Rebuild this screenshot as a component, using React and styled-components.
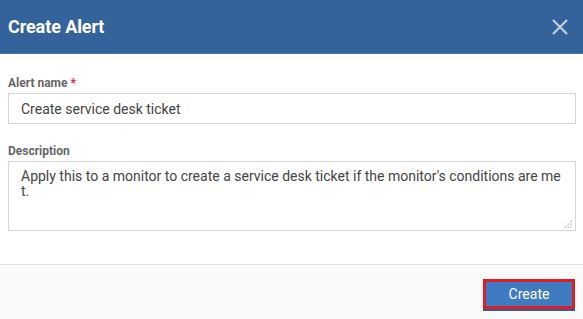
import React from "react";
import styled, { createGlobalStyle } from "styled-components";

const Global = createGlobalStyle`
  html, body {
    margin: 0;
    padding: 0;
    background: #ffffff;
  }
  body {
    font-family: Roboto, "Liberation Sans", sans-serif;
  }
`;

const Dialog = styled.div`
  width: 583px;
  height: 319px;
  display: flex;
  flex-direction: column;
  background: #ffffff;
  overflow: hidden;
`;

const Header = styled.div`
  height: 53px;
  display: flex;
  align-items: center;
  justify-content: space-between;
  padding: 0 14px 0 8px;
  background-color: #34629a;
  border-bottom: 1px solid #4a78ad;
`;

const Title = styled.h1`
  margin: 0;
  font-size: 18px;
  font-weight: 700;
  color: #ffffff;
  letter-spacing: -0.1px;
`;

const Close = styled.button`
  width: 18px;
  height: 18px;
  padding: 0;
  border: none;
  background: none;
  display: flex;
  align-items: center;
  justify-content: center;
  cursor: pointer;
`;

const Body = styled.div`
  flex: 1;
  display: flex;
  flex-direction: column;
  padding: 22px 7px 0 8px;
  border-bottom: 1px solid #dde3ea;
`;

const Field = styled.div`
  display: flex;
  flex-direction: column;
  gap: 3px;
  margin-bottom: ${(p) => p.$gap || 0}px;
`;

const Label = styled.label`
  font-size: 12px;
  line-height: 14px;
  font-weight: 700;
  color: #666666;
`;

const Req = styled.span`
  color: #d9262c;
`;

const Input = styled.input`
  box-sizing: border-box;
  width: 100%;
  height: 31px;
  padding: 0 12px;
  border: 1px solid #d7d7d7;
  font-family: Roboto, "Liberation Sans", sans-serif;
  font-size: 14px;
  color: #444444;
  outline: none;
`;

const AreaWrap = styled.div`
  position: relative;
`;

const Textarea = styled.textarea`
  box-sizing: border-box;
  width: 100%;
  height: 70px;
  padding: 7px 12px;
  border: 1px solid #d7d7d7;
  font-family: Roboto, "Liberation Sans", sans-serif;
  font-size: 14px;
  line-height: 15px;
  color: #444444;
  word-break: break-all;
  outline: none;
  resize: none;
  display: block;
`;

const Grip = styled.svg`
  position: absolute;
  right: 3px;
  bottom: 2px;
  pointer-events: none;
`;

const Footer = styled.div`
  height: 54px;
  display: flex;
  justify-content: flex-end;
  align-items: flex-start;
  padding: 14px 8px 0 0;
  box-sizing: border-box;
  background: #fafafa;
`;

const Button = styled.button`
  width: 92px;
  height: 30px;
  border: 3px solid #e31b23;
  background: #3f7bc0;
  color: #ffffff;
  font-family: Roboto, "Liberation Sans", sans-serif;
  font-size: 14px;
  box-shadow: 0 2px 0 #2e5d95;
  cursor: pointer;
`;

const dots = [
  [7, 1],
  [7, 4],
  [4, 4],
  [7, 7],
  [4, 7],
  [1, 7],
];

export default function App() {
  return (
    <>
      <Global />
      <Dialog>
        <Header>
          <Title>Create Alert</Title>
          <Close aria-label="Close">
            <svg width="16" height="16" viewBox="0 0 16 16">
              <path d="M1 1 L15 15 M15 1 L1 15" stroke="#c3cfdd" strokeWidth="2.2" />
            </svg>
          </Close>
        </Header>
        <Body>
          <Field $gap={20}>
            <Label>
              Alert name <Req>*</Req>
            </Label>
            <Input defaultValue="Create service desk ticket" />
          </Field>
          <Field>
            <Label>Description</Label>
            <AreaWrap>
              <Textarea defaultValue="Apply this to a monitor to create a service desk ticket if the monitor's conditions are met." />
              <Grip width="9" height="9" viewBox="0 0 9 9">
                {dots.map(([x, y]) => (
                  <rect key={`${x}-${y}`} x={x - 0.5} y={y - 0.5} width="1.2" height="1.2" fill="#9a9a9a" />
                ))}
              </Grip>
            </AreaWrap>
          </Field>
        </Body>
        <Footer>
          <Button>Create</Button>
        </Footer>
      </Dialog>
    </>
  );
}
